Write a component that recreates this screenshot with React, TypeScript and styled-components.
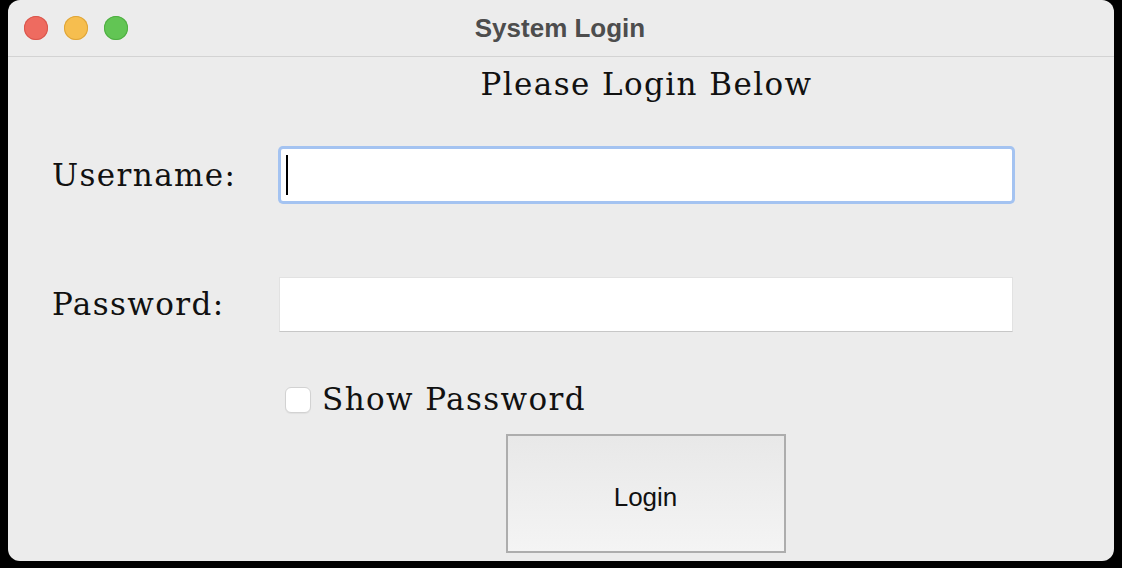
import React from "react";
import styled, { createGlobalStyle } from "styled-components";

const GlobalStyle = createGlobalStyle`
  html, body {
    margin: 0;
    padding: 0;
    background: #000000;
  }
  body {
    font-family: "Liberation Sans", Arial, sans-serif;
  }
`;

const Screen = styled.div`
  width: 1122px;
  height: 568px;
  background: #000000;
  padding-left: 8px;
  box-sizing: border-box;
`;

const Window = styled.div`
  width: 1106px;
  height: 561px;
  background: #ececec;
  border-radius: 12px;
  overflow: hidden;
  display: flex;
  flex-direction: column;
`;

const TitleBar = styled.div`
  height: 56px;
  border-bottom: 1px solid #d3d3d3;
  display: flex;
  align-items: center;
  padding-left: 16px;
  gap: 16px;
`;

const Light = styled.span<{ color: string; edge: string }>`
  width: 24px;
  height: 24px;
  border-radius: 50%;
  background: ${(p) => p.color};
  box-shadow: inset 0 0 0 1px ${(p) => p.edge};
  box-sizing: border-box;
`;

const Title = styled.div`
  flex: 1;
  text-align: center;
  margin-right: 138px;
  font-family: "Liberation Sans", Arial, sans-serif;
  font-weight: bold;
  font-size: 26px;
  color: #4d4d4d;
`;

const Content = styled.div`
  display: flex;
  flex-direction: column;
  padding-left: 44px;
`;

const Row = styled.div<{ top: number; h: number }>`
  display: grid;
  grid-template-columns: 226px 737px;
  align-items: center;
  margin-top: ${(p) => p.top}px;
  height: ${(p) => p.h}px;
`;

const Typewriter = styled.div`
  font-family: "DejaVu Serif", "Liberation Serif", serif;
  font-size: 31px;
  letter-spacing: 1.4px;
  color: #111111;
  line-height: 1;
  white-space: nowrap;
`;

const Heading = styled(Typewriter)`
  grid-column: 2;
  text-align: center;
`;

const Label = styled(Typewriter)``;

const Field = styled.div<{ focused?: boolean }>`
  background: #ffffff;
  box-sizing: border-box;
  display: flex;
  align-items: center;
  ${(p) =>
    p.focused
      ? `
    margin: 0 3px;
    height: 52px;
    border-radius: 2px;
    box-shadow: 0 0 0 3px #a4c3f1, 0 0 0 1px #8fb1e6;
    padding-left: 5px;
  `
      : `
    margin: 0 2px 0 1px;
    height: 55px;
    border: 1px solid #e2e2e2;
    border-bottom-color: #c7c7c7;
  `}
`;

const Caret = styled.span`
  width: 2px;
  height: 40px;
  background: #000000;
`;

const CheckLine = styled.label`
  grid-column: 2;
  display: flex;
  align-items: center;
  gap: 11px;
  padding-left: 7px;
`;

const Box = styled.span`
  width: 26px;
  height: 26px;
  border-radius: 6px;
  background: #ffffff;
  border: 1px solid #d2d2d2;
  box-sizing: border-box;
  box-shadow: 0 1px 1px rgba(0, 0, 0, 0.05);
`;

const ButtonCell = styled.div`
  grid-column: 2;
  display: flex;
  justify-content: center;
  height: 100%;
`;

const LoginButton = styled.button`
  width: 280px;
  height: 119px;
  margin-right: 2px;
  border: 2px solid #adadad;
  background: linear-gradient(#e8e8e8, #f4f4f4);
  font-family: "Liberation Sans", Arial, sans-serif;
  font-size: 26px;
  color: #111111;
  padding: 7px 0 0;
`;

export default function App() {
  return (
    <Screen>
      <GlobalStyle />
      <Window>
        <TitleBar>
          <Light color="#ee6b60" edge="#d9574d" />
          <Light color="#f6be4f" edge="#dea539" />
          <Light color="#62c554" edge="#4fae42" />
          <Title>System Login</Title>
        </TitleBar>
        <Content>
          <Row top={0} h={54}>
            <Heading>Please Login Below</Heading>
          </Row>
          <Row top={35} h={58}>
            <Label>Username:</Label>
            <Field focused>
              <Caret />
            </Field>
          </Row>
          <Row top={73} h={55}>
            <Label>Password:</Label>
            <Field />
          </Row>
          <Row top={52} h={30}>
            <CheckLine>
              <Box />
              <Typewriter>Show Password</Typewriter>
            </CheckLine>
          </Row>
          <Row top={20} h={119}>
            <ButtonCell>
              <LoginButton>Login</LoginButton>
            </ButtonCell>
          </Row>
        </Content>
      </Window>
    </Screen>
  );
}
